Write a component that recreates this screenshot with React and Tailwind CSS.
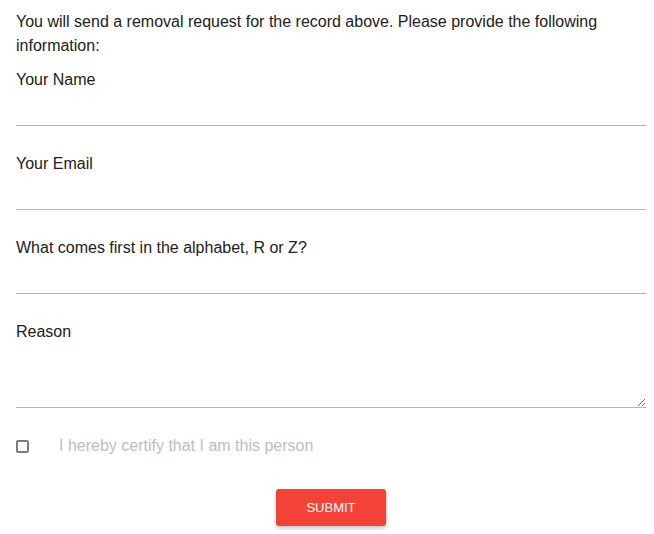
import React from "react";

const FIELDS = [
  { label: "Your Name", type: "text" },
  { label: "Your Email", type: "email" },
  { label: "What comes first in the alphabet, R or Z?", type: "text" },
];

export default function App() {
  return (
    <div className="min-h-screen bg-white pl-4 pr-2 pt-[10px] text-[16px] leading-6 text-[#212121] font-['Liberation_Sans',Arial,sans-serif]">
      <p className="mb-[10px]">
        You will send a removal request for the record above. Please provide the following information:
      </p>

      {FIELDS.map((field) => (
        <div key={field.label} className="mb-[26px]">
          <label className="block h-6">{field.label}</label>
          <input
            type={field.type}
            className="block h-[34px] w-full border-b border-[#b5b5b5] bg-transparent outline-none"
          />
        </div>
      ))}

      <div>
        <label className="block h-6">Reason</label>
        <textarea className="block h-16 w-full resize-y border-b border-[#b5b5b5] bg-transparent outline-none" />
      </div>

      {/* certify checkbox */}
      <div className="mt-[26px] flex h-6 items-center">
        <span className="block h-[13px] w-[13px] rounded-[2px] border-2 border-[#7b7b7b]" />
        <span className="ml-[30px] text-[#bdbdbd]">I hereby certify that I am this person</span>
      </div>

      <div className="mt-[31px] flex justify-center">
        <button className="h-[37px] w-[110px] rounded-[3px] bg-[#f44336] text-[13px] uppercase text-white shadow-[0_2px_4px_rgba(0,0,0,0.25)]">
          Submit
        </button>
      </div>
    </div>
  );
}
